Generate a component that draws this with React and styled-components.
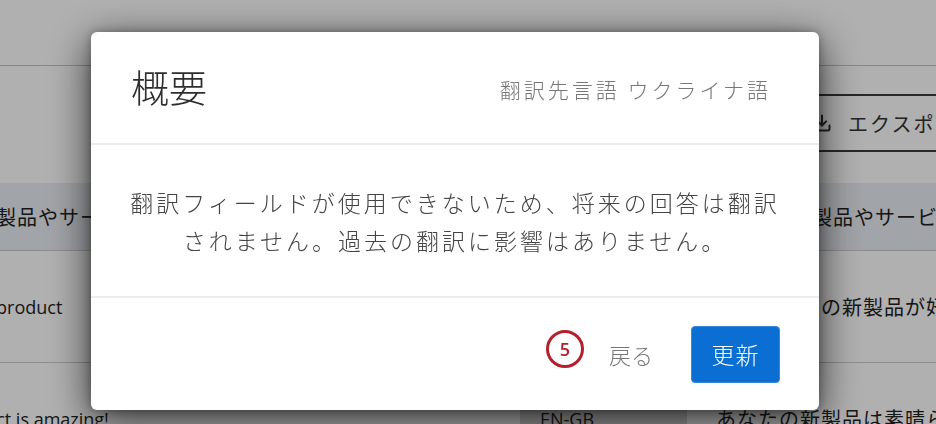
import React from 'react';
import styled, { createGlobalStyle } from 'styled-components';
import { Download } from 'lucide-react';

const GlobalStyle = createGlobalStyle`
  html, body {
    margin: 0;
    padding: 0;
    width: 936px;
    height: 424px;
    overflow: hidden;
    background: #ffffff;
  }
  * { box-sizing: border-box; }
`;

const jp = `"Noto Sans CJK JP", "Noto Sans", sans-serif`;

/* ---------- page behind the dialog ---------- */

const Page = styled.div`
  width: 936px;
  height: 424px;
  overflow: hidden;
  background: #ffffff;
  font-family: "Open Sans", ${jp};
  color: #222;
`;

const TopBar = styled.div`
  height: 66px;
  border-bottom: 1px solid #c4c4c4;
`;

const Toolbar = styled.div`
  height: 117px;
  display: flex;
  align-items: flex-start;
  padding: 28px 0 0 800px;
`;

const ExportButton = styled.div`
  flex: none;
  width: 260px;
  height: 58px;
  display: flex;
  align-items: center;
  gap: 16px;
  padding-left: 12px;
  border-top: 2px solid #3a3a3a;
  border-bottom: 2px solid #3a3a3a;
  font-family: ${jp};
  font-size: 20px;
  letter-spacing: 2px;
  color: #333;
`;

const Table = styled.div`
  margin-left: -88px;
  width: 1120px;
`;

const Row = styled.div`
  display: grid;
  grid-template-columns: 608px 167px 1fr;
  height: ${p => (p.$head ? 67 : 112)}px;
  background: ${p => (p.$head ? '#eaeef3' : '#ffffff')};
  border-top: ${p => (p.$head ? 'none' : '1px solid #cdcdcd')};
`;

const Cell = styled.div`
  display: flex;
  align-items: center;
  padding-left: ${p => p.$pad || 0}px;
  background: ${p => p.$shade || 'transparent'};
  font-family: ${p => (p.$jp ? jp : `"Open Sans", ${jp}`)};
  font-size: ${p => (p.$jp ? 20 : 18)}px;
  letter-spacing: ${p => (p.$jp ? 1 : 0)}px;
  white-space: nowrap;
  color: #222;
`;

/* ---------- dialog ---------- */

const Overlay = styled.div`
  position: fixed;
  inset: 0;
  background: rgba(0, 0, 0, 0.31);
  padding: 32px 0 0 91px;
`;

const Dialog = styled.div`
  width: 728px;
  height: 378px;
  background: #ffffff;
  border-radius: 6px;
  box-shadow: 0 10px 42px rgba(0, 0, 0, 0.75), 0 0 10px rgba(0, 0, 0, 0.3);
  display: flex;
  flex-direction: column;
  font-family: ${jp};
  overflow: hidden;
`;

const Header = styled.div`
  height: 113px;
  flex: none;
  display: flex;
  align-items: center;
  justify-content: space-between;
  padding: 0 48px 0 40px;
  border-bottom: 2px solid #ebebeb;
`;

const Title = styled.h1`
  margin: 0 0 4px;
  font-size: 38px;
  font-weight: 300;
  letter-spacing: 0;
  color: #2e2e2e;
  line-height: 1;
`;

const Target = styled.div`
  font-size: 21px;
  font-weight: 300;
  letter-spacing: 3px;
  color: #777;
  margin-top: 2px;
`;

const Body = styled.div`
  height: 153px;
  flex: none;
  display: flex;
  align-items: center;
  justify-content: center;
  border-bottom: 2px solid #ebebeb;
`;

const Message = styled.p`
  margin: 0;
  text-align: center;
  font-size: 23px;
  font-weight: 300;
  letter-spacing: 3px;
  line-height: 38px;
  color: #444;
  white-space: nowrap;
`;

const Footer = styled.div`
  flex: 1;
  display: flex;
  align-items: center;
  justify-content: flex-end;
  padding-right: 39px;
`;

const Badge = styled.div`
  width: 38px;
  height: 38px;
  border-radius: 50%;
  border: 3px solid #b5202e;
  color: #b5202e;
  display: flex;
  align-items: center;
  justify-content: center;
  font-family: "Open Sans", sans-serif;
  font-size: 18px;
  font-weight: 600;
  margin: 0 25px 10px 0;
`;

const LinkButton = styled.button`
  border: none;
  background: none;
  padding: 0;
  margin-right: 38px;
  font-family: ${jp};
  font-size: 22px;
  font-weight: 300;
  letter-spacing: 0;
  color: #777;
  cursor: pointer;
`;

const PrimaryButton = styled.button`
  width: 89px;
  height: 57px;
  border: 1px solid #3a87da;
  border-radius: 4px;
  background: #0b6ed2;
  color: #ffffff;
  font-family: ${jp};
  font-size: 23px;
  font-weight: 300;
  letter-spacing: 1px;
  cursor: pointer;
`;

export default function App() {
  return (
    <>
      <GlobalStyle />
      <Page>
        <TopBar />
        <Toolbar>
          <ExportButton>
            <Download size={20} strokeWidth={2.4} color="#333" />
            エクスポート
          </ExportButton>
        </Toolbar>
        <Table>
          <Row $head>
            <Cell $jp>あなたの製品やサービスについて</Cell>
            <Cell $jp $pad={20}>言語</Cell>
            <Cell $jp $pad={41}>あなたの製品やサービスについて</Cell>
          </Row>
          <Row>
            <Cell $pad={3}>I love the product</Cell>
            <Cell $pad={20}>EN-GB</Cell>
            <Cell $jp $pad={29}>私はあなたの新製品が好きです</Cell>
          </Row>
          <Row>
            <Cell $pad={3}>My product is amazing!</Cell>
            <Cell $pad={20} $shade="#d9d9d9">EN-GB</Cell>
            <Cell $jp $pad={29}>あなたの新製品は素晴らしい</Cell>
          </Row>
        </Table>
      </Page>

      <Overlay>
        <Dialog>
          <Header>
            <Title>概要</Title>
            <Target>翻訳先言語 ウクライナ語</Target>
          </Header>
          <Body>
            <Message>
              翻訳フィールドが使用できないため、将来の回答は翻訳
              <br />
              されません。過去の翻訳に影響はありません。
            </Message>
          </Body>
          <Footer>
            <Badge>5</Badge>
            <LinkButton>戻る</LinkButton>
            <PrimaryButton>更新</PrimaryButton>
          </Footer>
        </Dialog>
      </Overlay>
    </>
  );
}
